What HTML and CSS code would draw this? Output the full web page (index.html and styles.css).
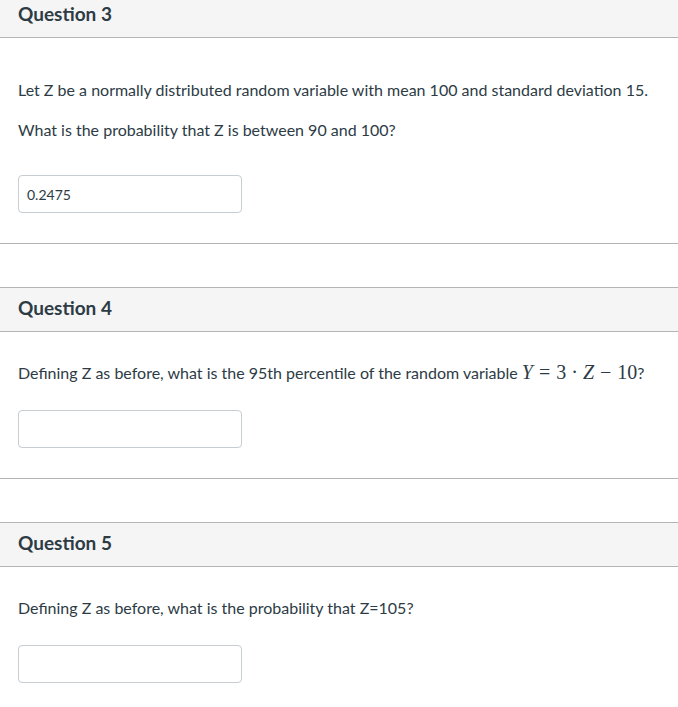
FILE: index.html
```html
<!DOCTYPE html>
<html lang="en">
<head>
<meta charset="utf-8">
<title>Quiz</title>
<link rel="stylesheet" href="styles.css">
</head>
<body>
<div class="quiz">
  <section class="question">
    <div class="q-header"><h2 class="q-title">Question 3</h2></div>
    <div class="q-body q-body--spaced">
      <p class="q-text">Let Z be a normally distributed random variable with mean 100 and standard deviation 15.</p>
      <p class="q-text q-text--second">What is the probability that Z is between 90 and 100?</p>
      <input class="answer" type="text" value="0.2475">
    </div>
  </section>
  <section class="question">
    <div class="q-header"><h2 class="q-title">Question 4</h2></div>
    <div class="q-body">
      <p class="q-text">Defining Z as before, what is the 95th percentile of the random variable <span class="math"><i>Y</i><span class="op">=</span>3<span class="op op--dot">·</span><i>Z</i><span class="op">−</span>10</span>?</p>
      <input class="answer" type="text" value="">
    </div>
  </section>
  <section class="question">
    <div class="q-header"><h2 class="q-title">Question 5</h2></div>
    <div class="q-body">
      <p class="q-text">Defining Z as before, what is the probability that Z=105?</p>
      <input class="answer" type="text" value="">
    </div>
  </section>
</div>
</body>
</html>
```

FILE: styles.css
```css
html, body {
  margin: 0;
  padding: 0;
  background: #ffffff;
}
body {
  font-family: Lato, "Open Sans", sans-serif;
  color: #2d3b45;
}
.quiz {
  margin-top: -7px;
}
.question {
  border-bottom: 1px solid #b4b4b4;
  margin-bottom: 43px;
}
.q-header {
  box-sizing: border-box;
  height: 45px;
  background: #f5f5f5;
  border-top: 1px solid #b4b4b4;
  border-bottom: 1px solid #b4b4b4;
  display: flex;
  align-items: center;
  padding-left: 18px;
  padding-bottom: 3px;
}
.q-title {
  margin: 0;
  font-size: 19px;
  font-weight: 700;
  line-height: 22px;
}
.q-body {
  padding: 30px 18px 30px;
}
.q-body--spaced {
  padding-top: 41px;
}
.q-text {
  margin: 0 0 26px;
  font-size: 16px;
  line-height: 22px;
}
.q-body--spaced .q-text {
  margin-bottom: 18px;
}
.q-body--spaced .q-text--second {
  margin-bottom: 34px;
}
.answer {
  display: block;
  box-sizing: border-box;
  width: 224px;
  height: 38px;
  margin: 0;
  padding: 0 8px;
  border: 1px solid #c7cdd1;
  border-radius: 4px;
  font-family: Lato, "Open Sans", sans-serif;
  font-size: 14px;
  color: #2d3b45;
  background: #fff;
  outline: none;
}
.math {
  font-family: "Liberation Serif", "DejaVu Serif", serif;
  font-size: 20px;
  line-height: 0;
}
.math i {
  font-style: italic;
}
.op {
  margin: 0 6px;
}
.op--dot {
  margin: 0 5px;
}
```
